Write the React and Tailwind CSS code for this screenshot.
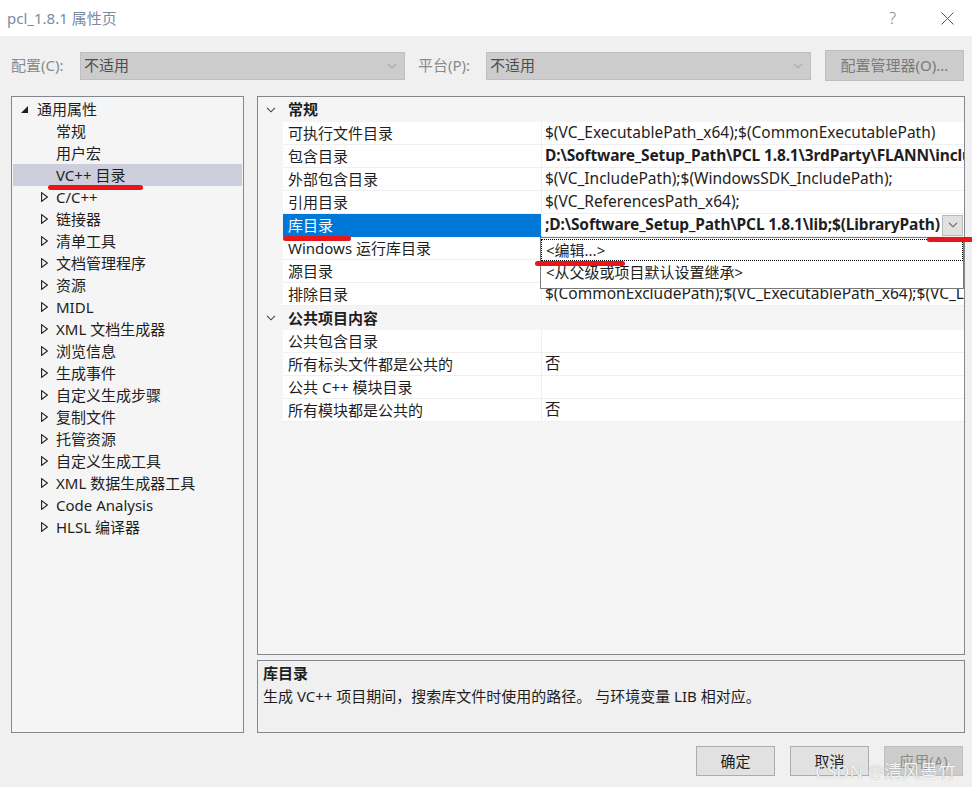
import React from "react";

const font = "font-['Noto_Sans','Noto_Sans_CJK_SC',sans-serif]";

const tree = [
  { label: "通用属性", kind: "open" },
  { label: "常规", kind: "leaf" },
  { label: "用户宏", kind: "leaf" },
  { label: "VC++ 目录", kind: "leaf", selected: true },
  { label: "C/C++", kind: "closed" },
  { label: "链接器", kind: "closed" },
  { label: "清单工具", kind: "closed" },
  { label: "文档管理程序", kind: "closed" },
  { label: "资源", kind: "closed" },
  { label: "MIDL", kind: "closed" },
  { label: "XML 文档生成器", kind: "closed" },
  { label: "浏览信息", kind: "closed" },
  { label: "生成事件", kind: "closed" },
  { label: "自定义生成步骤", kind: "closed" },
  { label: "复制文件", kind: "closed" },
  { label: "托管资源", kind: "closed" },
  { label: "自定义生成工具", kind: "closed" },
  { label: "XML 数据生成器工具", kind: "closed" },
  { label: "Code Analysis", kind: "closed" },
  { label: "HLSL 编译器", kind: "closed" },
];

const general = [
  { name: "可执行文件目录", value: "$(VC_ExecutablePath_x64);$(CommonExecutablePath)" },
  { name: "包含目录", value: "D:\\Software_Setup_Path\\PCL 1.8.1\\3rdParty\\FLANN\\include;D:\\Software_Setup_Path", bold: true },
  { name: "外部包含目录", value: "$(VC_IncludePath);$(WindowsSDK_IncludePath);" },
  { name: "引用目录", value: "$(VC_ReferencesPath_x64);" },
  { name: "库目录", value: ";D:\\Software_Setup_Path\\PCL 1.8.1\\lib;$(LibraryPath)", bold: true, selected: true },
  { name: "Windows 运行库目录", value: "$(WindowsSDK_MetadataPath);" },
  { name: "源目录", value: "$(VC_SourcePath);" },
  { name: "排除目录", value: "$(CommonExcludePath);$(VC_ExecutablePath_x64);$(VC_LibraryPath_x64)" },
];

const publicItems = [
  { name: "公共包含目录", value: "" },
  { name: "所有标头文件都是公共的", value: "否" },
  { name: "公共 C++ 模块目录", value: "" },
  { name: "所有模块都是公共的", value: "否" },
];

const Chevron = ({ className = "", color = "#444" }) => (
  <svg width="10" height="6" viewBox="0 0 10 6" className={className}>
    <polyline points="1,0.8 5,4.8 9,0.8" fill="none" stroke={color} strokeWidth="1.1" />
  </svg>
);

const TreeRow = ({ item }) => (
  <div
    className={`h-[22px] flex items-center mx-px ${item.selected ? "bg-[#cccedb]" : ""}`}
  >
    {item.kind === "open" && (
      <>
        <svg width="7" height="7" viewBox="0 0 7 7" className="ml-[8px]">
          <path d="M7 0 L7 7 L0 7 Z" fill="#1e1e1e" />
        </svg>
        <span className="ml-[9px]">{item.label}</span>
      </>
    )}
    {item.kind === "leaf" && <span className="ml-[43px]">{item.label}</span>}
    {item.kind === "closed" && (
      <>
        <svg width="7" height="10" viewBox="0 0 7 10" className="ml-[28px]">
          <path d="M0.6 0.6 L6.4 5 L0.6 9.4 Z" fill="none" stroke="#1e1e1e" strokeWidth="1.1" />
        </svg>
        <span className="ml-[8px]">{item.label}</span>
      </>
    )}
  </div>
);

const Category = ({ label, first }) => (
  <div className={`${first ? "h-[25px]" : "h-[24px]"} flex items-center`}>
    <Chevron className="ml-[8px]" />
    <span className="ml-[12px] font-bold">{label}</span>
  </div>
);

const PropRow = ({ row }) => (
  <div className="relative h-[23px] flex">
    <div className="w-[25px] shrink-0" />
    <div
      className={`w-[259px] shrink-0 flex items-center pl-[5px] border-b border-r ${
        row.selected
          ? "bg-[#0078d7] text-white border-b-[#0078d7] border-r-[#f0f0f0]"
          : "bg-white border-[#f0f0f0]"
      }`}
    >
      {row.name}
    </div>
    <div className="flex-1 min-w-0 bg-white border-b border-[#f0f0f0] flex items-center">
      <span
        className={`flex-1 min-w-0 overflow-hidden whitespace-nowrap pl-[3px] text-[15.5px] ${
          row.bold ? "font-bold tracking-[-0.15px]" : ""
        }`}
      >
        {row.value}
      </span>
      {row.selected && (
        <div className="w-[21px] h-[21px] shrink-0 mr-px bg-[#e1e1e1] border border-[#b9b9b9] flex items-center justify-center">
          <Chevron color="#606060" />
        </div>
      )}
    </div>
    {row.selected && (
      <div className="absolute left-[282px] top-full w-[424px] h-[52px] bg-white border border-[#7a7a7a] z-10 pt-px">
        <div className="h-[22px] flex items-center pl-[4px] border border-dotted border-black">
          &lt;编辑...&gt;
        </div>
        <div className="h-[22px] flex items-center pl-[5px]">&lt;从父级或项目默认设置继承&gt;</div>
      </div>
    )}
  </div>
);

const Button = ({ children, disabled }) => (
  <div
    className={`w-[79px] h-[30px] flex items-center justify-center border ${
      disabled
        ? "bg-[#cccccc] border-[#bfbfbf] text-[#8a8a8a]"
        : "bg-[#e1e1e1] border-[#adadad] text-[#1e1e1e]"
    }`}
  >
    {children}
  </div>
);

export default function App() {
  return (
    <div
      className={`relative w-[972px] h-[787px] overflow-hidden bg-[#f0f0f0] text-[15px] leading-none text-[#1e1e1e] ${font}`}
    >
      {/* title bar */}
      <div className="h-[36px] bg-white flex items-center">
        <span className="ml-[7px] text-[#7b8ba1]">pcl_1.8.1 属性页</span>
        <span className="ml-auto text-[#7a7a7a] font-light text-[16px]">?</span>
        <svg width="13" height="13" viewBox="0 0 13 13" className="ml-[45px] mr-[18px]">
          <path d="M0.5 0.5 L12.5 12.5 M12.5 0.5 L0.5 12.5" stroke="#555" strokeWidth="1" />
        </svg>
      </div>

      {/* config row */}
      <div className="mt-[14px] h-[31px] flex items-center pl-[11px] text-[#8a8a8a]">
        <span className="w-[69px]">配置(C):</span>
        <div className="w-[325px] h-[28px] bg-[#cccccc] border border-[#bfbfbf] flex items-center pl-[3px] text-[#4d4d4d]">
          不适用
          <Chevron className="ml-auto mr-[7px]" color="#a8a8a8" />
        </div>
        <span className="ml-[13px] w-[68px]">平台(P):</span>
        <div className="w-[325px] h-[28px] bg-[#cccccc] border border-[#bfbfbf] flex items-center pl-[3px] text-[#4d4d4d]">
          不适用
          <Chevron className="ml-auto mr-[7px]" color="#a8a8a8" />
        </div>
        <div className="ml-[14px] w-[139px] h-[31px] bg-[#cccccc] border border-[#bfbfbf] flex items-center justify-center text-[#7a7a7a]">
          配置管理器(O)...
        </div>
      </div>

      {/* main */}
      <div className="mt-[15px] h-[637px] flex pl-[11px] gap-[13px]">
        <div className="w-[233px] border border-[#828790] bg-[#f5f5f5] pt-px">
          {tree.map((t) => (
            <TreeRow key={t.label} item={t} />
          ))}
        </div>

        <div className="w-[708px] flex flex-col gap-[5px]">
          <div className="h-[559px] border border-[#828790] bg-[#f5f5f5]">
            <Category label="常规" first />
            {general.map((r) => (
              <PropRow key={r.name} row={r} />
            ))}
            <Category label="公共项目内容" />
            {publicItems.map((r) => (
              <PropRow key={r.name} row={r} />
            ))}
          </div>
          <div className="flex-1 border border-[#828790] bg-[#f0f0f0] pl-[5px] pt-[5px]">
            <div className="font-bold h-[14px] flex items-center">库目录</div>
            <div className="mt-[9px] h-[15px] flex items-center">
              生成 VC++ 项目期间，搜索库文件时使用的路径。 与环境变量 LIB 相对应。
            </div>
          </div>
        </div>
      </div>

      {/* buttons */}
      <div className="mt-[13px] flex justify-end gap-[15px] pr-[9px]">
        <Button>确定</Button>
        <Button>取消</Button>
        <Button disabled>应用(A)</Button>
      </div>

      {/* red annotation marks */}
      <div className="absolute left-[48px] top-[185px] w-[95px] h-[5px] rounded-full bg-[#e8161b]" />
      <div className="absolute left-[283px] top-[236px] w-[68px] h-[5px] rounded-full bg-[#e8161b]" />
      <div className="absolute left-[535px] top-[261px] w-[90px] h-[5px] rounded-full bg-[#e8161b] z-20" />
      <div className="absolute left-[927px] top-[237px] w-[46px] h-[5px] rounded-full bg-[#e8161b] z-20" />

      {/* watermark */}
      <div className="absolute left-[815px] top-[762px] text-[18px] text-white/90 [text-shadow:0_0_1px_#8a8a8a] whitespace-nowrap z-20">
        CSDN @清风墨竹
      </div>
    </div>
  );
}
